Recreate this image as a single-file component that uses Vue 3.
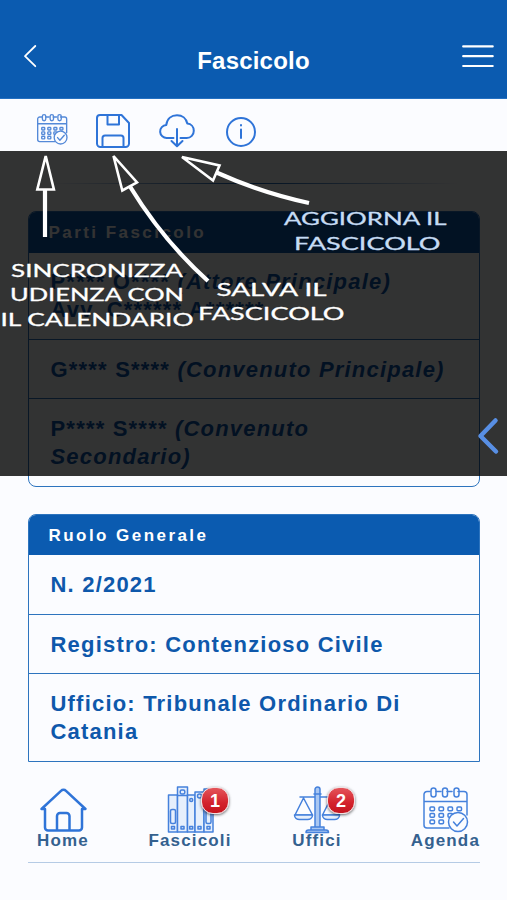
<template>
  <div class="page">
    <header class="top-bar">
      <button class="btn-icon" aria-label="Indietro">
        <svg width="14" height="24" viewBox="0 0 14 24"><path d="M12.3 2 2 12.2l10.3 10" /></svg>
      </button>
      <h1>Fascicolo</h1>
      <button class="btn-icon menu" aria-label="Menu">
        <svg width="34" height="26" viewBox="0 0 34 26"><path d="M2.2 2.4h29.5M2.2 12.2h29.5M2.2 22h29.5" /></svg>
      </button>
    </header>

    <div class="toolbar">
      <!-- Calendario -->
      <svg class="tool-cal" width="31" height="31" viewBox="0 0 46 46">
        <g class="thin">
          <path d="M7 4.500H4a3 3 0 0 0-3 3V38a3 3 0 0 0 3 3h22M13 4.500h5M24 4.500h5M35 4.500h6a3 3 0 0 1 3 3V28M1 14.500h43" />
          <rect v-for="x in [8, 19.500, 31]" :key="x" :x="x" y="1" width="5" height="9" rx="2.500" />
          <rect v-for="p in puntini" :key="p.join()" :x="p[0]" :y="p[1]" width="4.500" height="3.800" rx="1" />
          <circle class="disc" cx="35" cy="35" r="9.500" />
          <path d="m30.500 35 3.500 4 6.500-7.500" />
        </g>
      </svg>
      <!-- Salva -->
      <svg class="tool-save" width="34" height="34" viewBox="0 0 34 34">
        <path d="M4 1h21.500L33 9v20.500a3.500 3.500 0 0 1-3.500 3.500H4.500A3.500 3.500 0 0 1 1 29.500V4a3 3 0 0 1 3-3ZM11.500 1v9.500h11.500V1M6.500 33V24a2.500 2.500 0 0 1 2.500-2.500h16a2.500 2.500 0 0 1 2.500 2.500v9" />
      </svg>
      <!-- Aggiorna -->
      <svg class="tool-cloud" width="36" height="34" viewBox="0 0 36 34">
        <path d="M14.500 24H8a6.500 6.500 0 0 1-.7-13C8 4.500 12.500 1.200 18 1.200c5.300 0 9.300 3.300 10.300 8.300 3.900.4 6.500 3.500 6.500 7.200 0 4-3 7.300-7 7.300h-6.300M18 15v17M12.500 27l5.500 5.300 5.500-5.300" />
      </svg>
      <!-- Info -->
      <svg class="tool-info" width="32" height="32" viewBox="0 0 32 32">
        <circle cx="16" cy="16" r="14" />
        <path d="M16 13.500v8.500M16 9v.6" />
      </svg>
    </div>

    <main>
      <div class="divider"></div>

      <section v-for="s in sezioni" :key="s.titolo" :class="['card', { aperta: s.aperta }]">
        <h2>{{ s.titolo }}</h2>
        <div v-for="(riga, i) in s.righe" :key="i" class="riga">
          <div v-for="(v, k) in riga" :key="k">{{ v.nome }}<em v-if="v.ruolo">{{ ' ' + v.ruolo }}</em></div>
        </div>
      </section>
    </main>

    <nav class="bottom-nav">
      <a class="voce">
        <svg width="48" height="48" viewBox="0 0 48 48">
          <path class="mid" d="M2.500 23 22 4.800a3.600 3.600 0 0 1 5 0L46.500 23h-3.500v18.500a3 3 0 0 1-3 3h-31a3 3 0 0 1-3-3V23ZM18 44V30a3 3 0 0 1 3-3h6.500a3 3 0 0 1 3 3v14" />
        </svg>
        <span>Home</span>
      </a>
      <a class="voce">
        <svg class="libri" width="48" height="48" viewBox="0 0 48 48">
          <g class="thin">
            <rect class="tint" x="1.500" y="9" width="9" height="37" />
            <rect class="tint" x="10.500" y="1" width="10" height="45" />
            <rect class="tint" x="20.500" y="9" width="7.500" height="37" />
            <rect class="tint" x="28" y="6" width="9" height="40" />
            <rect class="tint" x="37" y="3" width="9" height="43" />
            <path d="M10.500 9.500h10" />
            <rect x="3.500" y="23.500" width="5" height="14" rx="1.500" />
            <rect x="39" y="23.500" width="5" height="14" rx="1.500" />
            <rect x="13.200" y="4" width="4.600" height="4" rx="1.500" />
            <circle cx="24.200" cy="14" r="1.500" />
            <circle cx="32.500" cy="10" r="2" />
            <rect v-for="x in [4.500, 14, 22.700, 31, 40]" :key="x" :x="x" y="40.500" width="3" height="2.500" />
          </g>
        </svg>
        <b class="badge b-fascicoli">1</b>
        <span>Fascicoli</span>
      </a>
      <a class="voce">
        <svg width="48" height="48" viewBox="0 0 48 48">
          <g class="thin">
            <path d="M7 11h34M10.500 12 2 29h17.500ZM38 12l-8.500 17h17Z" />
            <path class="tint" d="M1.500 29h18c0 3-2.500 4.500-5 4.500h-8c-2.500 0-5-1.500-5-4.500ZM29.500 29h17c0 3-2.500 4.500-5 4.500h-7c-2.500 0-5-1.500-5-4.500Z" />
            <path class="fill" d="M22 41V3.500a2.500 2.500 0 0 1 5 0V41M18 41h13v3H18ZM13 46.500c0-1.500 1-2.500 2.500-2.500h17.500c1.500 0 2.500 1 2.500 2.500Z" />
            <path d="M21 8h7" />
          </g>
        </svg>
        <b class="badge b-uffici">2</b>
        <span>Uffici</span>
      </a>
      <a class="voce agenda">
        <svg width="46" height="46" viewBox="0 0 46 46">
          <g class="thin">
            <path d="M7 4.500H4a3 3 0 0 0-3 3V38a3 3 0 0 0 3 3h22M13 4.500h5M24 4.500h5M35 4.500h6a3 3 0 0 1 3 3V28M1 14.500h43" />
            <rect v-for="x in [8, 19.500, 31]" :key="x" :x="x" y="1" width="5" height="9" rx="2.500" />
            <rect v-for="p in puntini" :key="p.join()" :x="p[0]" :y="p[1]" width="4.500" height="3.800" rx="1" />
            <circle class="disc" cx="35" cy="35" r="9.500" />
            <path d="m30.500 35 3.500 4 6.500-7.500" />
          </g>
        </svg>
        <span>Agenda</span>
      </a>
    </nav>

    <!-- Guida sovrapposta alla pagina -->
    <div class="guida">
      <svg width="507" height="325" viewBox="0 151 507 325">
        <g class="frecce">
          <path class="punta" d="M45.700 156 37.300 189.500h16.600Z" />
          <path d="M45 190v47" />
          <path class="punta" d="m113.500 156 23.500 26.500-14.700 8Z" />
          <path d="M130 186.500C145 211 168 245 208 281" />
          <path class="punta" d="m182 157 37.500 8.500-6.500 15Z" />
          <path d="M216.500 172.500c31 14 60 23.500 92.500 30.500" />
        </g>
        <text
          v-for="t in etichette"
          :key="t.x + t.testo"
          :x="t.x"
          :y="t.y"
          :textLength="t.w"
          lengthAdjust="spacingAndGlyphs"
          :class="{ chiaro: t.chiaro }"
        >{{ t.testo }}</text>
        <path class="avanti" d="M495.500 420.500 480.500 436l15.500 15.500" />
      </svg>
    </div>
  </div>
</template>

<script setup>
import { ref } from 'vue'

const sezioni = ref([
  {
    titolo: 'Parti Fascicolo',
    righe: [
      [
        { nome: 'P**** O****', ruolo: '(Attore Principale)' },
        { nome: 'Avv. C****** A******' }
      ],
      [{ nome: 'G**** S****', ruolo: '(Convenuto Principale)' }],
      [{ nome: 'P**** S****', ruolo: '(Convenuto Secondario)' }]
    ]
  },
  {
    titolo: 'Ruolo Generale',
    aperta: true,
    righe: [
      [{ nome: 'N. 2/2021' }],
      [{ nome: 'Registro: Contenzioso Civile' }],
      [{ nome: 'Ufficio: Tribunale Ordinario Di Catania' }]
    ]
  }
])

const etichette = [
  { testo: 'SINCRONIZZA', x: 11, y: 276.7, w: 172 },
  { testo: 'UDIENZA CON', x: 10, y: 301, w: 174 },
  { testo: 'IL CALENDARIO', x: 0.5, y: 325.5, w: 193 },
  { testo: 'SALVA IL', x: 216.5, y: 295.5, w: 110 },
  { testo: 'FASCICOLO', x: 198, y: 319.5, w: 146.5 },
  { testo: 'AGGIORNA IL', x: 284, y: 225, w: 162.5, chiaro: true },
  { testo: 'FASCICOLO', x: 294, y: 249.5, w: 146.5, chiaro: true }
]

// Caselle dei giorni nell'icona calendario
const puntini = [
  [7, 20], [16, 20], [25, 20], [34, 20],
  [7, 26.5], [16, 26.5], [25, 26.5],
  [7, 33], [16, 33]
]
</script>

<style>
body {
  background: #fbfcff;
}
</style>

<style scoped>
.page {
  position: relative;
  display: flex;
  flex-direction: column;
  width: 507px;
  height: 900px;
  overflow: hidden;
  box-sizing: border-box;
  background: #fbfcff;
  font-family: "Liberation Sans", Arial, sans-serif;
}

svg { display: block; fill: none; stroke: #2f74d8; stroke-width: 2; stroke-linecap: round; stroke-linejoin: round; overflow: visible; }

.top-bar {
  flex: none;
  display: grid;
  grid-template-columns: 60px 1fr 60px;
  height: 99px;
  box-sizing: border-box;
  padding-top: 44px;
  background: #0b5bb0;
  border-bottom: 1px solid #2470c2;
}
.top-bar h1 { margin: 2px 0 0; color: #fff; font-size: 24px; line-height: 30px; letter-spacing: 0.2px; text-align: center; }
.btn-icon { display: block; height: 24px; padding: 0 0 0 23px; border: none; background: none; }
.btn-icon svg { stroke: #fff; stroke-width: 1.8; }
.btn-icon.menu { padding: 0 0 0 14px; }
.btn-icon.menu svg { stroke-width: 2.2; }

.toolbar { flex: none; display: flex; height: 52px; box-sizing: border-box; padding: 15px 0 0 37px; }
.tool-cal { margin-right: 27.5px; }
.tool-save { margin-right: 29px; }
.tool-cloud { margin-right: 30px; }
.tool-info { margin-top: 2px; }

.thin { stroke-width: 1.5; stroke: #4581dc; }
.tool-cal .thin { stroke-width: 2; stroke: #5489d8; }
.mid { stroke-width: 2.5; }
.tint { fill: #e6effc; }
.fill { fill: #a9c7f2; }
.disc { fill: #fbfcff; }

main { flex: none; padding: 32px 27px 0 28px; }
.divider { height: 1px; margin-bottom: 27px; background: linear-gradient(90deg, transparent 5%, #0b5bb0 50%, transparent 95%); }

.card {
  box-sizing: border-box;
  margin-bottom: 27px;
  border: 1px solid #2d74be;
  border-radius: 8px;
  overflow: hidden;
}
.card.aperta { margin-bottom: 0; border-radius: 8px 8px 0 0; }
.card h2 {
  margin: 0;
  padding-left: 19.5px;
  height: 40.5px;
  background: #0b5bb0;
  color: #fff;
  font-size: 17px;
  line-height: 41px;
  letter-spacing: 2.45px;
}
.riga {
  padding: 15.8px 30px 14.7px 21.5px;
  border-bottom: 1px solid #2d74be;
  color: #0e58ab;
  font-size: 22px;
  font-weight: bold;
  line-height: 28px;
  letter-spacing: 1.2px;
}
.riga:last-child { border-bottom: none; }

.bottom-nav {
  flex: none;
  display: grid;
  grid-template-columns: 70px 184px 70px 128px;
  height: 101px;
  margin: 0 27px 0 28px;
  box-sizing: border-box;
  padding-top: 24px;
  border-bottom: 1px solid #b5cbe5;
}
.voce { position: relative; display: flex; flex-direction: column; align-items: center; }
.voce.agenda { align-items: flex-end; }
.voce.agenda svg { margin: 1px 11px 1px 0; }
.voce .libri { margin-left: 1px; }
.voce span { margin-top: -3px; color: #34618f; font-size: 17px; font-weight: bold; line-height: 19px; letter-spacing: 1.15px; }
.badge {
  position: absolute;
  top: 1.5px;
  left: 103px;
  width: 26px;
  height: 25px;
  border: 1.5px solid #f1dfe1;
  border-radius: 12px;
  background: linear-gradient(#e4545a, #d3222c 60%, #c5151f);
  box-shadow: 0 1px 3px rgba(0, 0, 0, 0.6);
  color: #fff;
  font-size: 18px;
  line-height: 26px;
  text-align: center;
}
.b-uffici { left: 45px; }

.guida { position: absolute; top: 151px; left: 0; width: 507px; height: 325px; background: rgba(0, 0, 0, 0.8); }
.frecce { stroke: #fff; stroke-width: 4.2; stroke-linecap: butt; }
.frecce .punta { stroke-width: 2.6; stroke-linejoin: miter; }
.guida text { fill: #fff; stroke: #fff; stroke-width: 0.3; font-family: Lato, sans-serif; font-size: 17.5px; }
.guida text.chiaro { fill: #c6dcf4; stroke: #c6dcf4; }
.guida .avanti { stroke: #588fe4; stroke-width: 4.5; }
</style>
